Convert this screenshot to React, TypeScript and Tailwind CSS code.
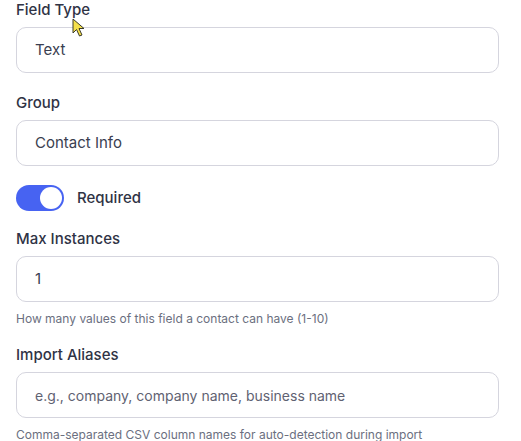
import React from "react";

const font = { fontFamily: "Inter, 'Noto Sans', sans-serif" };

function Label({ children }: { children: React.ReactNode }) {
  return (
    <div className="text-[15px] leading-[20px] font-medium text-[#2f3345] mb-[7px]">
      {children}
    </div>
  );
}

function Input({ value, placeholder }: { value?: string; placeholder?: string }) {
  return (
    <div className="w-[483px] h-[46px] rounded-[10px] border border-[#d5d5de] bg-white flex items-center pl-[18px] text-[15px]">
      {value ? (
        <span className="text-[#3a3e50]">{value}</span>
      ) : (
        <span className="text-[#5f6272] text-[14px]">{placeholder}</span>
      )}
    </div>
  );
}

export default function App() {
  return (
    <div className="relative w-[521px] h-[441px] bg-white overflow-hidden" style={font}>
      <div className="pl-4 pt-0">
        <Label>Field Type</Label>
        <Input value="Text" />
        <div className="h-[20px]" />
        <Label>Group</Label>
        <Input value="Contact Info" />
        <div className="h-[19px]" />
        <div className="flex items-center gap-[13px] h-[26px]">
          <div className="w-[48px] h-[26px] rounded-full bg-[#4763f2] flex items-center justify-end pr-[2px]">
            <div className="w-[22px] h-[22px] rounded-full bg-white" />
          </div>
          <span className="text-[15px] font-medium text-[#2f3345]">Required</span>
        </div>
        <div className="h-[18px]" />
        <Label>Max Instances</Label>
        <Input value="1" />
        <div className="mt-[8px] text-[12px] leading-[18px] text-[#6b6f80]">
          How many values of this field a contact can have (1-10)
        </div>
        <div className="h-[17px]" />
        <Label>Import Aliases</Label>
        <Input placeholder="e.g., company, company name, business name" />
        <div className="mt-[8px] text-[12px] leading-[18px] text-[#6b6f80]">
          Comma-separated CSV column names for auto-detection during import
        </div>
      </div>
      <svg
        className="absolute left-[72px] top-[18px]"
        width="16"
        height="20"
        viewBox="0 0 16 20"
      >
        <path
          d="M1 1 L1 15 L4.5 11.5 L7.5 18 L10 17 L7 10.5 L12 10.5 Z"
          fill="#f5e04a"
          stroke="#3a3a2a"
          strokeWidth="1"
          strokeLinejoin="round"
        />
      </svg>
    </div>
  );
}
